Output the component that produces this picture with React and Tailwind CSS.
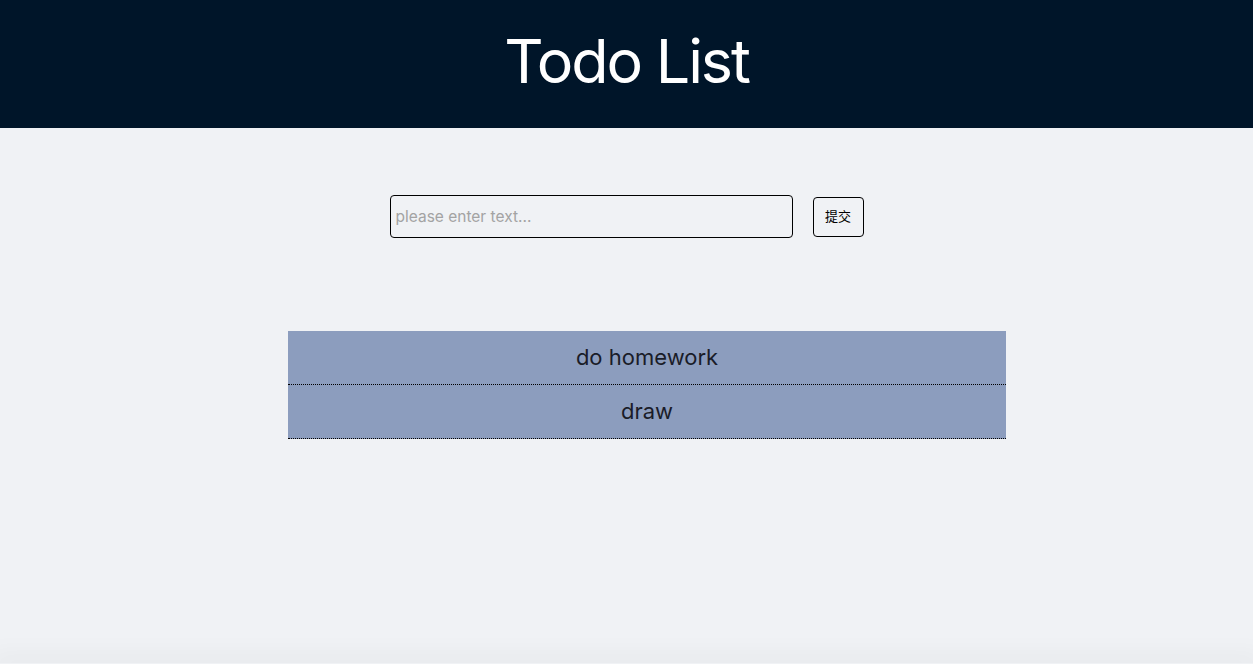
const todos = ["do homework", "draw"];

const App = () => {
  return (
    <div className="min-h-screen flex flex-col bg-[#f0f2f5] font-['Inter','Noto_Sans_CJK_SC',sans-serif]">
      <header className="h-[128px] bg-[#001529] flex items-center justify-center shrink-0">
        <h1 className="text-white text-[61px] tracking-[-0.035em] leading-none pb-[6px]">Todo List</h1>
      </header>

      <main className="flex-1">
        <div className="pt-[67px] flex items-center justify-center gap-[20px]">
          <input
            type="text"
            placeholder="please enter text..."
            className="w-[403px] h-[43px] border border-black rounded-[4px] px-[5px] text-[15.5px] bg-transparent placeholder:text-[#a3a3a3] outline-none"
          />
          <button className="w-[51px] h-[40px] border border-black rounded-[4px] text-[13px] text-black">
            提交
          </button>
        </div>

        <ul className="mt-[93px] ml-[288px] w-[718px]">
          {todos.map((todo) => (
            <li
              key={todo}
              className="h-[54px] bg-[#8c9dbe] border-b border-dotted border-black flex items-center justify-center text-[22px] text-[#1a1c28]"
            >
              {todo}
            </li>
          ))}
        </ul>
      </main>

      <footer className="h-px w-full shadow-[0_0_24px_10px_rgba(0,0,0,0.04)]" />
    </div>
  );
};

export default App;
